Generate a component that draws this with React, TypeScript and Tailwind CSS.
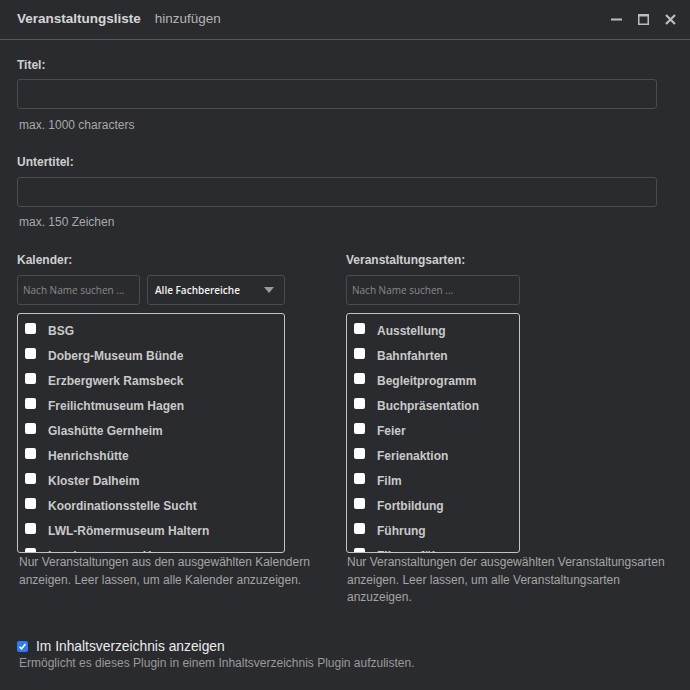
import React from "react";

const kalender = [
  "BSG",
  "Doberg-Museum Bünde",
  "Erzbergwerk Ramsbeck",
  "Freilichtmuseum Hagen",
  "Glashütte Gernheim",
  "Henrichshütte",
  "Kloster Dalheim",
  "Koordinationsstelle Sucht",
  "LWL-Römermuseum Haltern",
  "Landesmuseum Herne",
];

const arten = [
  "Ausstellung",
  "Bahnfahrten",
  "Begleitprogramm",
  "Buchpräsentation",
  "Feier",
  "Ferienaktion",
  "Film",
  "Fortbildung",
  "Führung",
  "Filmvorführung",
];

function CheckList({ items, width }: { items: string[]; width: string }) {
  return (
    <div
      className={`${width} h-[240px] mt-[8px] border border-[#c4c4c4] rounded-[3px] overflow-hidden pl-[7px] pt-[4px]`}
    >
      {items.map((it) => (
        <div key={it} className="flex items-center h-[25px]">
          <div className="w-[11px] h-[11px] bg-white rounded-[2px] mb-[4px] shrink-0" />
          <span className="ml-[12px] text-[12px] font-bold text-[#c9c9c9] whitespace-nowrap">
            {it}
          </span>
        </div>
      ))}
    </div>
  );
}

function Search({ width }: { width: string }) {
  return (
    <div
      className={`${width} h-[30px] border border-[#4b4c50] rounded-[3px] flex items-center pl-[5px] font-['Open_Sans'] text-[10px] text-[#8a8a8a]`}
    >
      Nach Name suchen ...
    </div>
  );
}

export default function App() {
  return (
    <div className="w-[690px] h-[690px] bg-[#2a2b2e] overflow-hidden font-['Liberation_Sans',Arial,sans-serif]">
      <div className="h-[40px] border-b border-[#56575a] flex items-center pl-[17px] pr-[14px]">
        <span className="text-[13.5px] font-bold text-[#d6d6d6]">Veranstaltungsliste</span>
        <span className="ml-[14px] text-[13.5px] text-[#b4b4b4]">hinzufügen</span>
        <div className="ml-auto flex items-center gap-[16px] text-[#bdbdbd]">
          <svg width="11" height="11" viewBox="0 0 11 11">
            <rect x="0" y="4.5" width="11" height="2" fill="#bdbdbd" />
          </svg>
          <svg width="11" height="11" viewBox="0 0 11 11">
            <rect x="0.75" y="0.75" width="9.5" height="9.5" fill="none" stroke="#bdbdbd" strokeWidth="1.5" />
            <rect x="0" y="0" width="11" height="2.5" fill="#bdbdbd" />
          </svg>
          <svg width="11" height="11" viewBox="0 0 11 11">
            <path d="M1 1 L10 10 M10 1 L1 10" stroke="#bdbdbd" strokeWidth="2.2" />
          </svg>
        </div>
      </div>

      <div className="px-[17px] pt-[18px]">
        <div className="text-[12px] font-bold text-[#cfcfcf] leading-[15px]">Titel:</div>
        <div className="mt-[6px] w-[640px] h-[30px] border border-[#4b4c50] rounded-[3px]" />
        <div className="mt-[9px] pl-[2px] text-[12px] text-[#a9a9a9] leading-[15px]">max. 1000 characters</div>

        <div className="mt-[22px] text-[12px] font-bold text-[#cfcfcf] leading-[15px]">Untertitel:</div>
        <div className="mt-[7px] w-[640px] h-[30px] border border-[#4b4c50] rounded-[3px]" />
        <div className="mt-[8px] pl-[2px] text-[12px] text-[#a9a9a9] leading-[15px]">max. 150 Zeichen</div>

        <div className="mt-[23px] grid grid-cols-[329px_311px]">
          <div>
            <div className="text-[12px] font-bold text-[#cfcfcf] leading-[15px]">Kalender:</div>
            <div className="mt-[7px] flex gap-[7px]">
              <Search width="w-[123px]" />
              <div className="w-[138px] h-[30px] border border-[#4b4c50] rounded-[3px] flex items-center pl-[7px] pr-[10px]">
                <span className="font-['Open_Sans'] text-[10px] font-semibold text-[#f2f2f2]">Alle Fachbereiche</span>
                <svg className="ml-auto" width="10" height="6" viewBox="0 0 10 6">
                  <path d="M0 0 L10 0 L5 6 Z" fill="#9a9a9a" />
                </svg>
              </div>
            </div>
            <CheckList items={kalender} width="w-[268px]" />
            <div className="pt-[1px] pl-[2px] pr-[10px] text-[12px] text-[#a5a5a5] leading-[17.5px]">
              Nur Veranstaltungen aus den ausgewählten Kalendern anzeigen. Leer lassen, um alle Kalender anzuzeigen.
            </div>
          </div>
          <div>
            <div className="text-[12px] font-bold text-[#cfcfcf] leading-[15px]">Veranstaltungsarten:</div>
            <div className="mt-[7px] flex">
              <Search width="w-[174px]" />
            </div>
            <CheckList items={arten} width="w-[174px]" />
            <div className="pt-[1px] pl-[1px] text-[12px] text-[#a5a5a5] leading-[17.5px] whitespace-nowrap">
              Nur Veranstaltungen der ausgewählten Veranstaltungsarten
              <br />
              anzeigen. Leer lassen, um alle Veranstaltungsarten
              <br />
              anzuzeigen.
            </div>
          </div>
        </div>

        <div className="mt-[31px] flex items-center">
          <div className="w-[11px] h-[11px] rounded-[2px] bg-[#2f7cf0] flex items-center justify-center">
            <svg width="9" height="9" viewBox="0 0 9 9">
              <path d="M1.5 4.8 L3.6 6.8 L7.5 2" fill="none" stroke="white" strokeWidth="1.6" />
            </svg>
          </div>
          <span className="ml-[8px] text-[13.8px] text-[#ececec] leading-[17px]">Im Inhaltsverzeichnis anzeigen</span>
        </div>
        <div className="mt-[1px] pl-[2px] text-[12px] text-[#9a9a9a] leading-[15px]">
          Ermöglicht es dieses Plugin in einem Inhaltsverzeichnis Plugin aufzulisten.
        </div>
      </div>
    </div>
  );
}
